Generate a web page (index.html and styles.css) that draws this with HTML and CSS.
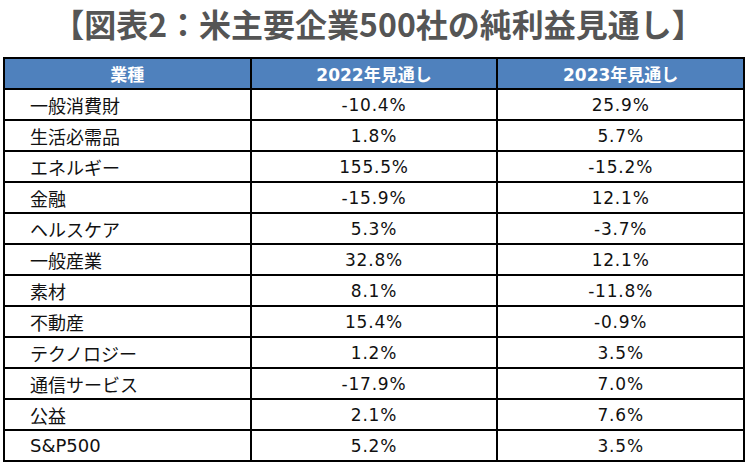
FILE: index.html
```html
<!DOCTYPE html>
<html lang="ja">
<head>
<meta charset="utf-8">
<link rel="stylesheet" href="styles.css">
</head>
<body>
<div class="page">
  <h1 class="title">【図表2：米主要企業500社の純利益見通し】</h1>
  <table class="grid">
    <thead>
      <tr><th>業種</th><th>2022年見通し</th><th>2023年見通し</th></tr>
    </thead>
    <tbody>
      <tr><td class="name">一般消費財</td><td>-10.4%</td><td>25.9%</td></tr>
      <tr><td class="name">生活必需品</td><td>1.8%</td><td>5.7%</td></tr>
      <tr><td class="name">エネルギー</td><td>155.5%</td><td>-15.2%</td></tr>
      <tr><td class="name">金融</td><td>-15.9%</td><td>12.1%</td></tr>
      <tr><td class="name">ヘルスケア</td><td>5.3%</td><td>-3.7%</td></tr>
      <tr><td class="name">一般産業</td><td>32.8%</td><td>12.1%</td></tr>
      <tr><td class="name">素材</td><td>8.1%</td><td>-11.8%</td></tr>
      <tr><td class="name">不動産</td><td>15.4%</td><td>-0.9%</td></tr>
      <tr><td class="name">テクノロジー</td><td>1.2%</td><td>3.5%</td></tr>
      <tr><td class="name">通信サービス</td><td>-17.9%</td><td>7.0%</td></tr>
      <tr><td class="name">公益</td><td>2.1%</td><td>7.6%</td></tr>
      <tr><td class="name">S&amp;P500</td><td>5.2%</td><td>3.5%</td></tr>
    </tbody>
  </table>
</div>
</body>
</html>
```
FILE: styles.css
```css
html, body {
  margin: 0;
  padding: 0;
  background: #ffffff;
}
.page {
  width: 756px;
  padding: 0 0 0 3px;
  box-sizing: border-box;
}
.title {
  margin: 0;
  height: 57px;
  padding: 0 3px 0 0;
  box-sizing: border-box;
  text-align: center;
  font-family: "Noto Sans CJK JP", sans-serif;
  font-weight: 700;
  font-size: 32px;
  line-height: 46px;
  color: #555555;
  letter-spacing: 0;
  white-space: nowrap;
}
.grid {
  border-collapse: collapse;
  width: 742px;
  table-layout: fixed;
}
.grid th, .grid td {
  border: 2px solid #000000;
  padding: 0;
  box-sizing: border-box;
  text-align: center;
  vertical-align: middle;
}
.grid th {
  background: #4f81bd;
  color: #ffffff;
  font-family: "DejaVu Sans", "Noto Sans CJK JP", sans-serif;
  font-weight: 700;
  font-size: 17px;
  height: 31px;
}
.grid td {
  font-family: "DejaVu Sans", "Noto Sans CJK JP", sans-serif;
  font-size: 17px;
  color: #111111;
  letter-spacing: 0.8px;
  height: 31px;
}
.grid td.name {
  text-align: left;
  padding-left: 25px;
  font-size: 18px;
  letter-spacing: 0;
}
```
